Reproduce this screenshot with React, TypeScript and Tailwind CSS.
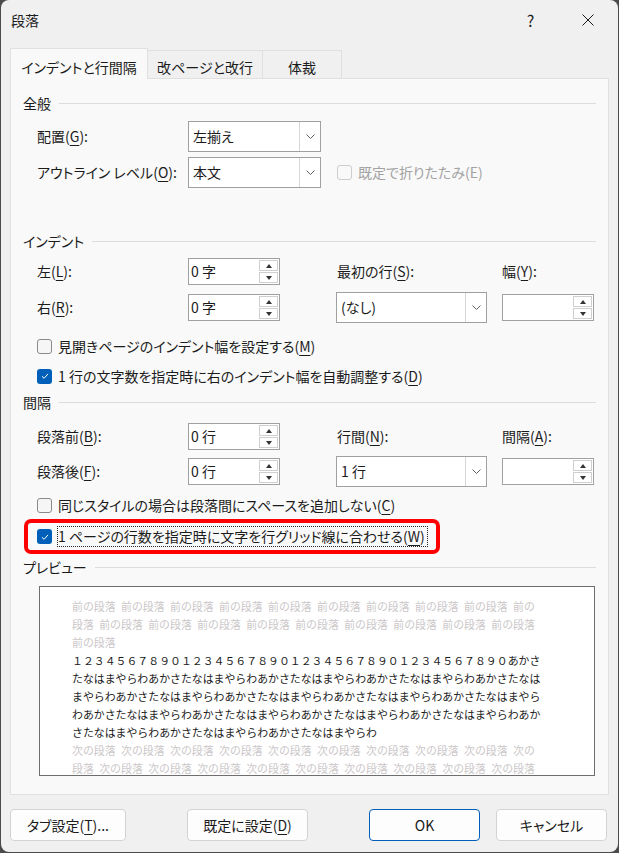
import React from "react";

function U({ children }: { children: string }) {
  return <span className="underline underline-offset-[3px] decoration-1">{children}</span>;
}

function Header({ title }: { title: string }) {
  return (
    <div className="h-[20px] flex items-center gap-[8px]">
      <span>{title}</span>
      <div className="flex-1 h-px bg-[#dcdcdc]" />
    </div>
  );
}

function Chevron() {
  return (
    <svg width="9" height="5" viewBox="0 0 9 5">
      <path d="M0.5 0.5 4.5 4.5 8.5 0.5" fill="none" stroke="#606060" strokeWidth="1" />
    </svg>
  );
}

function Select({ value, w }: { value: string; w: string }) {
  return (
    <div className={w + " h-[31px] border border-[#a0a0a0] bg-white flex"}>
      <div className="flex-1 flex items-center pl-[4px]">{value}</div>
      <div className="w-[21px] border-l border-[#d6d6d6] flex items-center justify-center">
        <Chevron />
      </div>
    </div>
  );
}

function Spin({ value }: { value?: string }) {
  return (
    <div className="w-[92px] h-[27px] border border-[#a0a0a0] bg-white flex">
      <div className="flex-1 flex items-center pl-[2px]">{value}</div>
      <div className="w-[20px] flex flex-col gap-px py-px pr-px">
        <div className="flex-1 border border-[#cfcfcf] bg-white flex items-center justify-center">
          <span className="border-x-[3.5px] border-x-transparent border-b-[4px] border-b-[#333]" />
        </div>
        <div className="flex-1 border border-[#cfcfcf] bg-white flex items-center justify-center">
          <span className="border-x-[3.5px] border-x-transparent border-t-[4px] border-t-[#333]" />
        </div>
      </div>
    </div>
  );
}

function Check({ checked, disabled }: { checked?: boolean; disabled?: boolean }) {
  if (checked) {
    return (
      <span className="w-[15px] h-[15px] shrink-0 rounded-[3px] bg-[#005fb8] flex items-center justify-center">
        <svg width="10" height="10" viewBox="0 0 10 10">
          <path d="M2 5.3 4.1 7.3 8 2.9" fill="none" stroke="white" strokeWidth="1" />
        </svg>
      </span>
    );
  }
  return (
    <span
      className={
        disabled
          ? "w-[15px] h-[15px] shrink-0 rounded-[3px] border border-[#cdcdcd] bg-[#f9f9f9]"
          : "w-[15px] h-[15px] shrink-0 rounded-[3px] border border-[#8a8a8a] bg-[#f6f6f6]"
      }
    />
  );
}

const prev1 = "前の段落 前の段落 前の段落 前の段落 前の段落 前の段落 前の段落 前の段落 前の段落 前の";
const prev2 = "段落 前の段落 前の段落 前の段落 前の段落 前の段落 前の段落 前の段落 前の段落 前の段落";
const next1 = "次の段落 次の段落 次の段落 次の段落 次の段落 次の段落 次の段落 次の段落 次の段落 次の";
const next2 = "段落 次の段落 次の段落 次の段落 次の段落 次の段落 次の段落 次の段落 次の段落 次の段落";
const main = [
  "１２３４５６７８９０１２３４５６７８９０１２３４５６７８９０１２３４５６７８９０あかさ",
  "たなはまやらわあかさたなはまやらわあかさたなはまやらわあかさたなはまやらわあかさたなは",
  "まやらわあかさたなはまやらわあかさたなはまやらわあかさたなはまやらわあかさたなはまやら",
  "わあかさたなはまやらわあかさたなはまやらわあかさたなはまやらわあかさたなはまやらわあか",
  "さたなはまやらわあかさたなはまやらわあかさたなはまやらわ",
];

export default function App() {
  return (
    <div className="w-[619px] h-[853px] bg-[#4b4b4b] pl-px font-['Noto_Sans_CJK_JP',sans-serif] text-[14px] text-[#1b1b1b] [font-feature-settings:'palt']">
      <div className="w-[617px] h-[852px] rounded-[8px] bg-[#f0f0f0] px-[9px] flex flex-col">
        {/* title bar */}
        <div className="h-[40px] flex items-center -mr-[7px]">
          <span className="pl-px">段落</span>
          <div className="ml-auto w-[57px] h-[40px] flex items-center justify-center text-[16px]">?</div>
          <div className="w-[57px] h-[40px] flex items-center justify-center">
            <svg width="12" height="12" viewBox="0 0 12 12">
              <path d="M0.5 0.5 11.5 11.5 M11.5 0.5 0.5 11.5" stroke="#1b1b1b" strokeWidth="1" />
            </svg>
          </div>
        </div>

        {/* tabs */}
        <div className="mt-[8px] h-[30px] flex items-end">
          <div className="relative z-10 w-[138px] h-[31px] -mb-px border border-b-0 border-[#e0e0e0] bg-[#f9f9f9] pt-[8px] text-center">
            インデントと行間隔
          </div>
          <div className="w-[115px] h-[28px] border border-l-0 border-b-0 border-[#e0e0e0] bg-[#f0f0f0] pt-[6px] text-center">
            改ページと改行
          </div>
          <div className="w-[79px] h-[28px] border border-l-0 border-b-0 border-[#e0e0e0] bg-[#f0f0f0] pt-[6px] text-center">
            体裁
          </div>
        </div>

        {/* panel */}
        <div className="h-[717px] border border-[#e0e0e0] bg-[#f9f9f9] px-[12px] flex flex-col">
          <div className="mt-[14px]">
            <Header title="全般" />
          </div>
          <div className="mt-[8px] ml-[14px] h-[31px] flex items-center">
            <div className="w-[151px]">
              配置(<U>G</U>):
            </div>
            <Select value="左揃え" w="w-[133px]" />
          </div>
          <div className="mt-[5px] ml-[14px] h-[31px] flex items-center">
            <div className="w-[151px]">
              アウトライン レベル(<U>O</U>):
            </div>
            <Select value="本文" w="w-[133px]" />
            <div className="ml-[16px] flex items-center gap-[6px] text-[#a3a3a3]">
              <Check disabled />
              <span>既定で折りたたみ(E)</span>
            </div>
          </div>

          <div className="mt-[43px]">
            <Header title="インデント" />
          </div>
          <div className="mt-[7px] ml-[14px] h-[27px] flex items-center">
            <div className="w-[151px]">
              左(<U>L</U>):
            </div>
            <Spin value="0 字" />
            <div className="ml-[57px] w-[165px]">
              最初の行(<U>S</U>):
            </div>
            <div>
              幅(<U>Y</U>):
            </div>
          </div>
          <div className="mt-[7px] ml-[14px] h-[31px] flex items-center">
            <div className="w-[151px]">
              右(<U>R</U>):
            </div>
            <Spin value="0 字" />
            <div className="ml-[56px]">
              <Select value="(なし)" w="w-[151px]" />
            </div>
            <div className="ml-[15px]">
              <Spin />
            </div>
          </div>
          <div className="mt-[13px] ml-[14px] h-[20px] flex items-center gap-[6px]">
            <Check />
            <span>
              見開きページのインデント幅を設定する(<U>M</U>)
            </span>
          </div>
          <div className="mt-[10px] ml-[14px] h-[20px] flex items-center gap-[6px]">
            <Check checked />
            <span>
              1 行の文字数を指定時に右のインデント幅を自動調整する(<U>D</U>)
            </span>
          </div>

          <div className="mt-[6px]">
            <Header title="間隔" />
          </div>
          <div className="mt-[11px] ml-[14px] h-[27px] flex items-center">
            <div className="w-[151px]">
              段落前(<U>B</U>):
            </div>
            <Spin value="0 行" />
            <div className="ml-[57px] w-[165px]">
              行間(<U>N</U>):
            </div>
            <div>
              間隔(<U>A</U>):
            </div>
          </div>
          <div className="mt-[6px] ml-[14px] h-[31px] flex items-center">
            <div className="w-[151px]">
              段落後(<U>F</U>):
            </div>
            <Spin value="0 行" />
            <div className="ml-[56px]">
              <Select value="1 行" w="w-[151px]" />
            </div>
            <div className="ml-[15px]">
              <Spin />
            </div>
          </div>
          <div className="mt-[10px] ml-[14px] h-[16px] flex items-center gap-[6px]">
            <Check />
            <span>
              同じスタイルの場合は段落間にスペースを追加しない(<U>C</U>)
            </span>
          </div>

          {/* highlighted option */}
          <div className="mt-[6px] ml-px w-[416px] h-[35px] border-4 border-[#ff0000] rounded-[7px] pl-[9px] pt-[3px]">
            <div className="h-[21px] flex items-center gap-[5px]">
              <Check checked />
              <span className="h-[21px] flex items-center border border-dotted border-[#222] pr-[2px]">
                1 ページの行数を指定時に文字を行グリッド線に合わせる(<U>W</U>)
              </span>
            </div>
          </div>

          <div className="mt-[3px]">
            <Header title="プレビュー" />
          </div>
          <div className="mt-[9px] ml-[16px] w-[556px] h-[190px] border border-[#6e6e6e] bg-white pl-[32px] pt-[10px] overflow-hidden text-[10.9px] leading-[18px] whitespace-nowrap [font-feature-settings:normal]">
            <div className="text-[#cbc7c9] [word-spacing:3px]">{prev1}</div>
            <div className="text-[#cbc7c9] [word-spacing:3px]">{prev2}</div>
            <div className="text-[#cbc7c9]">前の段落</div>
            {main.map((line) => (
              <div key={line} className="text-[#1b1b1b]">
                {line}
              </div>
            ))}
            <div className="text-[#cbc7c9] [word-spacing:3px]">{next1}</div>
            <div className="text-[#cbc7c9] [word-spacing:3px]">{next2}</div>
          </div>
        </div>

        {/* buttons */}
        <div className="mt-[14px] flex">
          <button className="w-[116px] h-[32px] rounded-[4px] border border-[#d3d3d3] bg-[#fdfdfd]">
            タブ設定(<U>T</U>)...
          </button>
          <button className="ml-[61px] w-[121px] h-[32px] rounded-[4px] border border-[#d3d3d3] bg-[#fdfdfd]">
            既定に設定(<U>D</U>)
          </button>
          <button className="ml-[61px] w-[111px] h-[32px] rounded-[4px] border border-[#005fb8] bg-[#fdfdfd]">
            OK
          </button>
          <button className="ml-[16px] w-[111px] h-[32px] rounded-[4px] border border-[#d3d3d3] bg-[#fdfdfd]">
            キャンセル
          </button>
        </div>
      </div>
    </div>
  );
}
